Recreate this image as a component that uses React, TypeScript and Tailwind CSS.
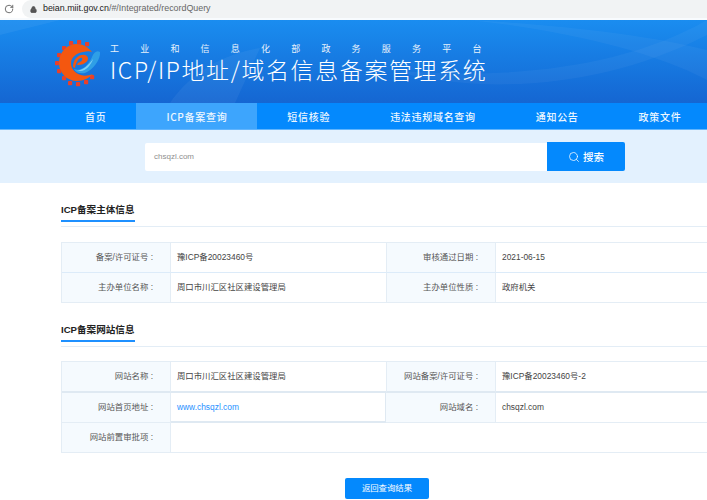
import { Lock, RotateCw, Search } from "lucide-react";

const font = { fontFamily: '"Liberation Sans", "Noto Sans CJK SC", sans-serif' };

function Logo() {
  const dots: [number, number][] = [
    [16, 6], [24, 5], [32, 7], [9, 11], [4, 18], [2, 26], [4, 34], [9, 41], [15, 46], [23, 47], [31, 45], [37, 40],
  ];
  return (
    <svg width="46" height="50" viewBox="0 0 46 50" className="shrink-0">
      {dots.map(([x, y]) => (
        <rect key={`${x}-${y}`} x={x - 2} y={y - 2} width="4.2" height="4.2" rx="0.8" fill="#e8402a" />
      ))}
      <path d="M37 15 C33 10 28 7 22 7 C12 7 4 15 4 26 C4 36 12 44 22 44 C29 44 34 41 38 37 C33 39 29 39 26 38 C20 36 16 32 16 26 C16 20 22 16 28 15 C32 14 35 14 37 15 Z" fill="#f4570f" />
      <path d="M18 30 C18 22 24 17 30 18 C34 19 34 24 30 26 C27 28 24 28 22 28 L23 26 C26 25 28 23 27 21 C25 20 21 24 20 31 Z" fill="#f4570f" />
      <path d="M19 32 C26 35 33 29 37 20 C39 15 42 13 45 15 C46 22 38 33 30 36 C25 37 21 36 19 32 Z" fill="#2f9fe6" />
      <path d="M22 33 C27 34 33 29 38 22 C36 29 28 37 22 33 Z" fill="#7fd0f5" />
    </svg>
  );
}

const navItems = ["首页", "ICP备案查询", "短信核验", "违法违规域名查询", "通知公告", "政策文件"];

function SectionTitle({ children }: { children: string }) {
  return (
    <div className="border-b border-[#e3edf6] h-[28px] ml-[61px]">
      <div className="h-[23px] w-[74px] border-b-2 border-[#1e90ff] text-[9.6px] leading-[21px] font-bold text-[#222] whitespace-nowrap">
        {children}
      </div>
    </div>
  );
}

function Label({ children, cls = "" }: { children: string; cls?: string }) {
  return (
    <div className={`flex items-center justify-end pr-[17px] bg-[#f5fafe] text-[8.4px] text-[#555] border-r border-[#e4edf5] whitespace-pre ${cls}`}>
      {children}
    </div>
  );
}

function Value({ children, cls = "text-[#444]" }: { children?: React.ReactNode; cls?: string }) {
  return <div className={`flex items-center pl-[6px] text-[8.4px] whitespace-nowrap ${cls}`}>{children}</div>;
}

export default function App() {
  return (
    <div className="w-[707px] h-[500px] overflow-hidden bg-white relative" style={font}>
      <div className="h-[20px] flex items-start border-b-2 border-[#f8fbfe]">
        <div className="w-[22px] h-[18px] flex items-center justify-center">
          <RotateCw size={10} strokeWidth={2} className="text-[#555] mr-[4px]" />
        </div>
        <div className="flex-1 h-[18px] bg-[#f1f3f4] rounded-l-[9px] flex items-center pl-[8px]">
          <Lock size={7} strokeWidth={3} className="text-[#555] fill-[#555] mr-[6px]" />
          <span className="text-[8.9px] text-[#222]">beian.miit.gov.cn</span>
          <span className="text-[8.9px] text-[#666]">/#/Integrated/recordQuery</span>
        </div>
      </div>

      <div className="h-[83px] relative overflow-hidden bg-gradient-to-b from-[#1a8df0] to-[#1566d2] flex items-center pl-[55px]">
        <svg className="absolute inset-0" width="707" height="83" viewBox="0 0 707 83">
          <path d="M0 0 L60 0 L0 15 Z" fill="#ffffff" opacity="0.05" />
          <path d="M170 83 C185 60 215 35 260 28 L235 83 Z" fill="#ffffff" opacity="0.05" />
          <path d="M390 50 C480 75 600 70 707 15 L707 0 C620 50 500 60 390 50 Z" fill="#ffffff" opacity="0.04" />
          <path d="M470 0 C560 10 650 30 707 60 L707 30 C650 15 560 5 470 0 Z" fill="#ffffff" opacity="0.04" />
        </svg>
        <div className="relative flex items-center">
          <Logo />
          <div className="ml-[9px] text-white mt-[2px]">
            <div className="text-[9px] leading-[12px] tracking-[21.2px] whitespace-nowrap opacity-90 font-['Noto_Sans_CJK_SC',sans-serif]">工业和信息化部政务服务平台</div>
            <div className="text-[23px] leading-[28px] tracking-[1.6px] whitespace-nowrap font-light font-['Noto_Sans_CJK_SC',sans-serif]">ICP/IP地址/域名信息备案管理系统</div>
          </div>
        </div>
      </div>

      <div className="h-[27px] bg-[#0489fd] border-b border-[#62b5fd] flex pl-[55px]">
        {navItems.map((n, i) => (
          <div key={n} className={`px-[30px] flex items-center text-[10px] font-medium tracking-[0.7px] text-[#eef7ff] whitespace-nowrap font-['Noto_Sans_CJK_SC',sans-serif] ${i === 1 ? "bg-[#3da5fd]" : ""}`}>
            {n}
          </div>
        ))}
      </div>

      <div className="h-[53px] bg-[#e3f1fe] flex items-center pl-[145px]">
        <div className="w-[402px] h-[28px] mt-[1px] bg-white rounded-l-[2px] flex items-center pl-[9px] text-[8px] text-[#8f8f8f]">chsqzl.com</div>
        <div className="w-[78px] h-[29px] bg-[#0489fd] rounded-r-[2px] flex items-center justify-center text-white text-[10.5px] font-medium gap-[3px] font-['Noto_Sans_CJK_SC',sans-serif]">
          <Search size={12} strokeWidth={1.5} />
          <span>搜索</span>
        </div>
      </div>

      <div className="mt-[16px]">
        <SectionTitle>ICP备案主体信息</SectionTitle>
      </div>

      <div className="ml-[61px] mt-[15px] w-[700px] grid grid-cols-[109px_215px_110px_264px] grid-rows-[30px_29px] border border-[#e4edf5]">
        <Label cls="border-b border-b-[#dcebf9]">备案/许可证号 :</Label>
        <Value cls="border-b border-[#dcebf9] text-[#444]">豫ICP备20023460号</Value>
        <Label cls="border-b border-b-[#dcebf9] border-l">审核通过日期 :</Label>
        <Value cls="border-b border-[#dcebf9] text-[#444]">2021-06-15</Value>
        <Label>主办单位名称 :</Label>
        <Value>周口市川汇区社区建设管理局</Value>
        <Label cls="border-l">主办单位性质 :</Label>
        <Value>政府机关</Value>
      </div>

      <div className="mt-[16px]">
        <SectionTitle>ICP备案网站信息</SectionTitle>
      </div>

      <div className="ml-[61px] mt-[14px] w-[700px] grid grid-cols-[109px_215px_110px_264px] grid-rows-[31px_30px_29px] border border-[#e4edf5]">
        <Label cls="border-b-2 border-b-[#dfe9f2]">网站名称 :</Label>
        <Value cls="border-b-2 border-[#dfe9f2] text-[#444]">周口市川汇区社区建设管理局</Value>
        <Label cls="border-b-2 border-b-[#dfe9f2] border-l">网站备案/许可证号 :</Label>
        <Value cls="border-b-2 border-[#dfe9f2] text-[#444]">豫ICP备20023460号-2</Value>
        <Label cls="border-b border-b-[#e4edf5]">网站首页地址 :</Label>
        <Value cls="border-b-2 border-r border-[#dfe9f2] text-[#1e90ff]">www.chsqzl.com</Value>
        <Label cls="border-b border-b-[#e4edf5]">网站域名 :</Label>
        <Value cls="border-b border-[#e4edf5] text-[#444]">chsqzl.com</Value>
        <Label>网站前置审批项 :</Label>
        <Value cls="col-span-3" />
      </div>

      <div className="flex justify-start pl-[345px] mt-[25px]">
        <div className="w-[84px] h-[21px] rounded-[2px] bg-[#0489fd] text-white text-[8.4px] flex items-center justify-center">返回查询结果</div>
      </div>
    </div>
  );
}
